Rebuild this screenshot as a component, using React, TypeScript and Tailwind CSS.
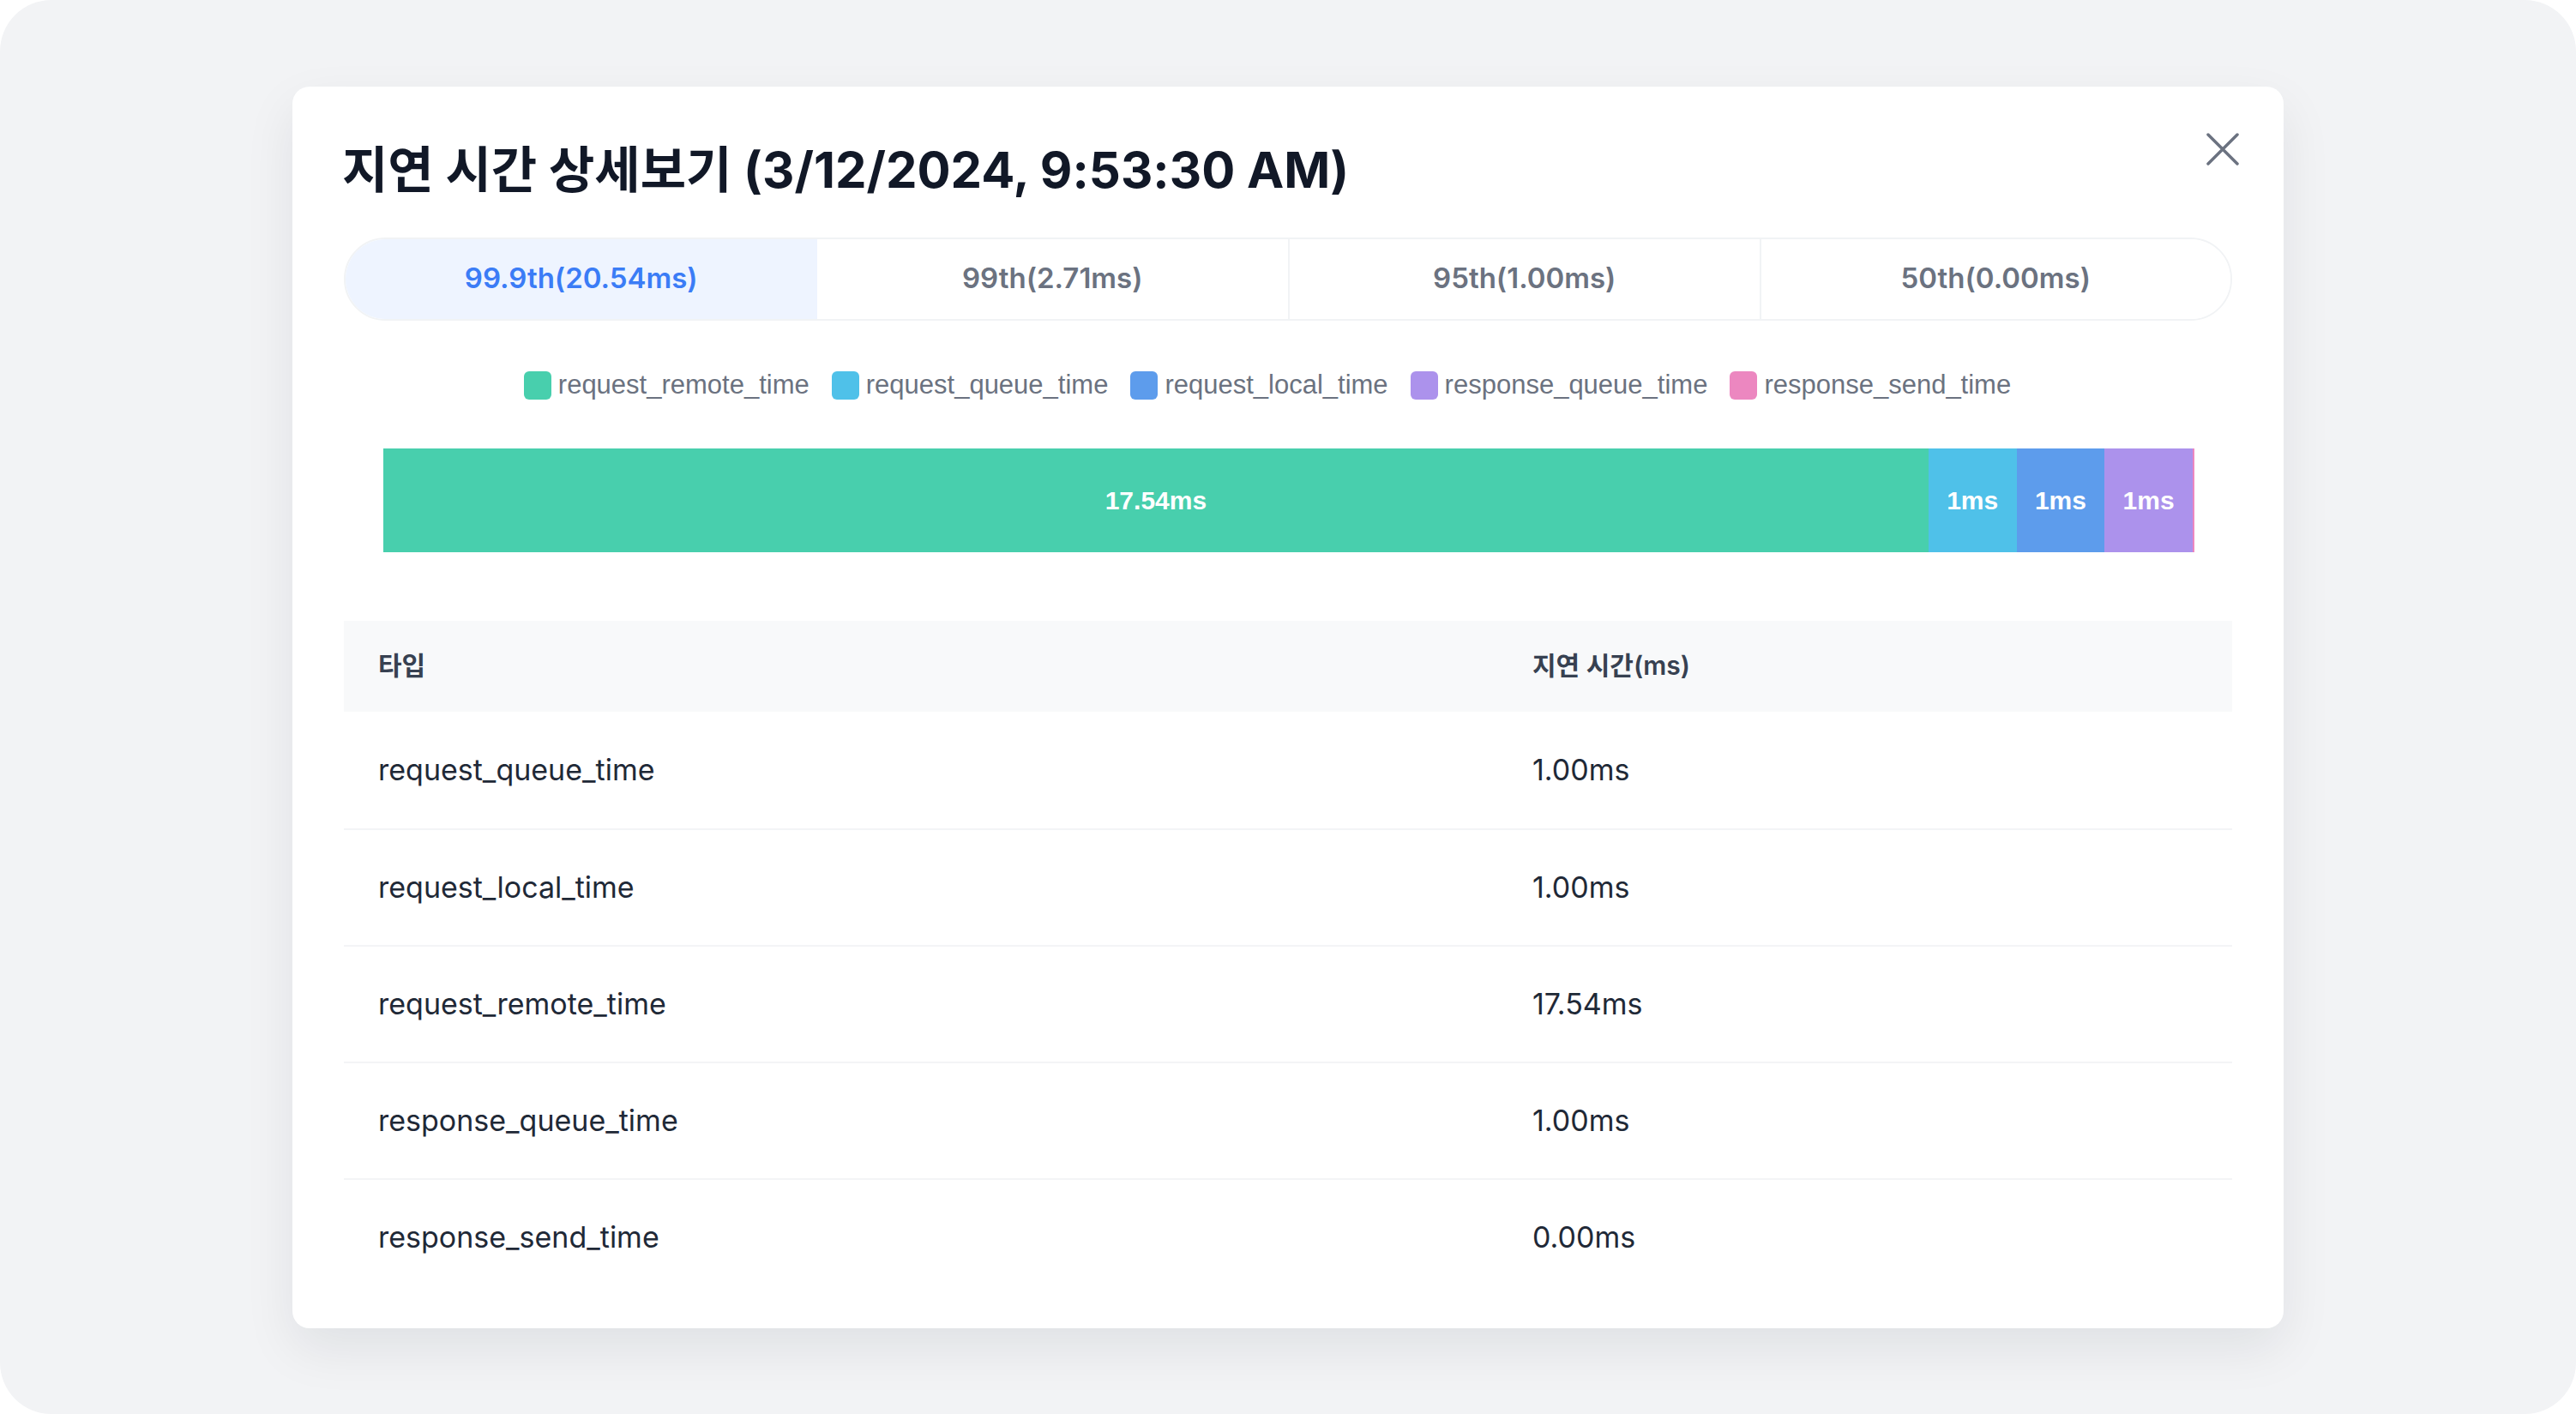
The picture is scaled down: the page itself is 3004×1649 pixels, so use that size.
import React from "react";

const tabs = [
  { label: "99.9th(20.54ms)", active: true },
  { label: "99th(2.71ms)", active: false },
  { label: "95th(1.00ms)", active: false },
  { label: "50th(0.00ms)", active: false },
];

const legend = [
  { name: "request_remote_time", color: "bg-[#48CFAD]" },
  { name: "request_queue_time", color: "bg-[#4FC1E9]" },
  { name: "request_local_time", color: "bg-[#5D9CEC]" },
  { name: "response_queue_time", color: "bg-[#AC92EC]" },
  { name: "response_send_time", color: "bg-[#EC87C0]" },
];

const segments = [
  { value: 17.54, label: "17.54ms", color: "bg-[#48CFAD]" },
  { value: 1, label: "1ms", color: "bg-[#4FC1E9]" },
  { value: 1, label: "1ms", color: "bg-[#5D9CEC]" },
  { value: 1, label: "1ms", color: "bg-[#AC92EC]" },
];

const rows = [
  { type: "request_queue_time", ms: "1.00ms" },
  { type: "request_local_time", ms: "1.00ms" },
  { type: "request_remote_time", ms: "17.54ms" },
  { type: "response_queue_time", ms: "1.00ms" },
  { type: "response_send_time", ms: "0.00ms" },
];

export default function App() {
  return (
    <div className="w-[3004px] h-[1649px] bg-white font-[Inter,'Noto_Sans_CJK_KR',sans-serif]">
      <div className="w-full h-full rounded-[60px] bg-[#f2f3f5] flex items-center justify-center">
        <div className="relative w-[2322px] h-[1448px] rounded-[20px] bg-white shadow-[0_24px_60px_rgba(17,24,39,0.08)] px-[60px] pt-[60px]">
          <button className="absolute right-[52px] top-[54px] w-[38px] h-[38px] text-[#6b7280]">
            <svg viewBox="0 0 38 38" className="w-[38px] h-[38px]" fill="none" stroke="currentColor" strokeWidth="3.5" strokeLinecap="round">
              <path d="M2 2 L36 36 M36 2 L2 36" />
            </svg>
          </button>

          <div className="h-[74px] flex items-center">
            <h1 className="text-[58px] font-bold text-[#111827] leading-none -ml-[2px]">
              지연 시간 상세보기 (3/12/2024, 9:53:30 AM)
            </h1>
          </div>

          <div className="mt-[42px] h-[97px] grid grid-cols-4 rounded-full border-2 border-[#f1f3f5] overflow-hidden">
            {tabs.map((t, i) => (
              <div
                key={t.label}
                className={
                  "flex items-center justify-center text-[33px] font-semibold " +
                  (t.active ? "bg-[#eef4ff] text-[#3b7cf6]" : "bg-white text-[#6b7280]") +
                  (i > 1 ? " border-l-2 border-[#f1f3f5]" : "")
                }
              >
                {t.label}
              </div>
            ))}
          </div>

          <div className="mt-[56px] h-[40px] flex items-center justify-center gap-[26px] pr-[48px] font-['Liberation_Sans',Arial,sans-serif] text-[31px] text-[#6b7280]">
            {legend.map((l) => (
              <div key={l.name} className="flex items-center gap-[8px]">
                <span className={"w-[32px] h-[33px] rounded-[6px] " + l.color} />
                <span>{l.name}</span>
              </div>
            ))}
          </div>

          <div className="mt-[53px] ml-[46px] mr-[44px] h-[121px] flex font-['Liberation_Sans',Arial,sans-serif] text-[30px] font-bold text-white">
            {segments.map((s, i) => (
              <div
                key={i}
                className={"h-full flex items-center justify-center " + s.color}
                style={{ flexGrow: s.value, flexBasis: 0 }}
              >
                {s.label}
              </div>
            ))}
            <div className="h-full w-[2px] bg-[#EC87C0]" />
          </div>

          <div className="mt-[80px]">
            <div className="h-[106px] flex items-center bg-[#f8f9fa] text-[30px] font-semibold text-[#374151]">
              <div className="w-[1346px] pl-[40px]">타입</div>
              <div className="pl-[40px]">지연 시간(ms)</div>
            </div>
            {rows.map((r, i) => (
              <div
                key={r.type}
                className={
                  "h-[136px] flex items-center text-[34px] text-[#1f2937] " +
                  (i > 0 ? "border-t-2 border-[#f3f4f6]" : "")
                }
              >
                <div className="w-[1346px] pl-[40px]">{r.type}</div>
                <div className="pl-[40px]">{r.ms}</div>
              </div>
            ))}
          </div>
        </div>
      </div>
    </div>
  );
}
